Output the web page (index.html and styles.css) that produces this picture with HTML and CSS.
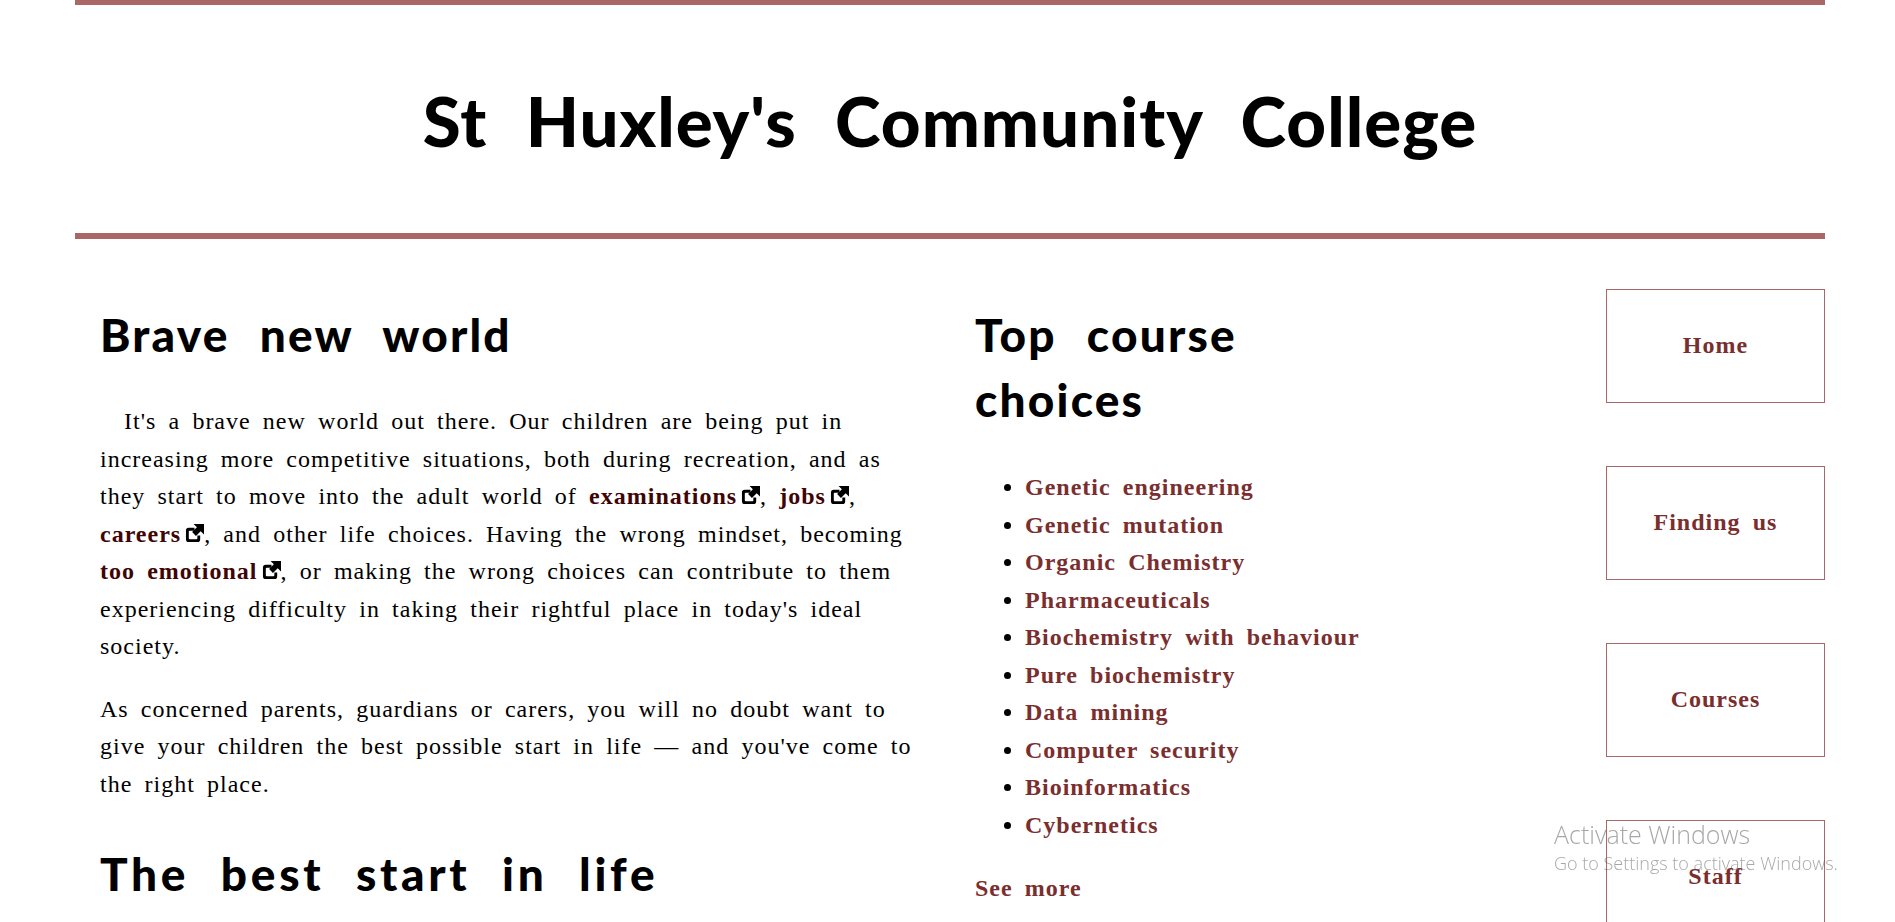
FILE: index.html
```html
<!DOCTYPE html>
<html>
<head>
    <title>St Huxley's Community College</title>
    <link rel="stylesheet" href="styles.css">
</head>
<body>
    <svg class="icon-defs">
        <symbol id="ext-link" viewBox="0 0 20 20">
            <path d="M4 4h6v3H5a1 1 0 0 0-1 1v7a1 1 0 0 0 1 1h7a1 1 0 0 0 1-1v-3h3v4a3 3 0 0 1-3 3H4a3 3 0 0 1-3-3V7a3 3 0 0 1 3-3z"/>
            <path d="M9 0h11v11l-3.5-3.5-5 5-4-4 5-5z"/>
        </symbol>
    </svg>
    <div class="page">
        <header class="site-header">
            <h1>St Huxley's Community College</h1>
        </header>
        <div class="columns">
            <main class="main-col">
                <h2>Brave new world</h2>
                <p class="intro">It's a brave new world out there. Our children are being put in increasing more competitive situations, both during recreation, and as they start to move into the adult world of <a href="#" class="ext">examinations<svg class="ext-icon"><use href="#ext-link"/></svg></a>, <a href="#" class="ext">jobs<svg class="ext-icon"><use href="#ext-link"/></svg></a>, <a href="#" class="ext">careers<svg class="ext-icon"><use href="#ext-link"/></svg></a>, and other life choices. Having the wrong mindset, becoming <a href="#" class="ext">too emotional<svg class="ext-icon"><use href="#ext-link"/></svg></a>, or making the wrong choices can contribute to them experiencing difficulty in taking their rightful place in today's ideal society.</p>
                <p>As concerned parents, guardians or carers, you will no doubt want to give your children the best possible start in life &mdash; and you've come to the right place.</p>
                <h2 class="wide-title">The best start in life</h2>
            </main>
            <aside class="course-col">
                <h2>Top course choices</h2>
                <ul class="course-list">
                    <li><a href="#">Genetic engineering</a></li>
                    <li><a href="#">Genetic mutation</a></li>
                    <li><a href="#">Organic Chemistry</a></li>
                    <li><a href="#">Pharmaceuticals</a></li>
                    <li><a href="#">Biochemistry with behaviour</a></li>
                    <li><a href="#">Pure biochemistry</a></li>
                    <li><a href="#">Data mining</a></li>
                    <li><a href="#">Computer security</a></li>
                    <li><a href="#">Bioinformatics</a></li>
                    <li><a href="#">Cybernetics</a></li>
                </ul>
                <p><a href="#">See more</a></p>
            </aside>
            <nav class="side-nav">
                <a href="#">Home</a>
                <a href="#">Finding us</a>
                <a href="#">Courses</a>
                <a href="#">Staff</a>
            </nav>
        </div>
    </div>
    <div class="activate">
        <div class="activate-title">Activate Windows</div>
        <div class="activate-sub">Go to Settings to activate Windows.</div>
    </div>
</body>
</html>
```

FILE: styles.css
```css
html, body {
    height: 922px;
    overflow: hidden;
}

body {
    margin: 0;
    background-color: #ffffff;
    color: #000000;
    font-family: "Liberation Serif", "Times New Roman", serif;
    font-size: 24px;
    line-height: 37.5px;
    letter-spacing: 1px;
    word-spacing: 5.2px;
}

.icon-defs {
    display: none;
}

.page {
    width: 1750px;
    margin-left: 75px;
}

.site-header {
    height: 228px;
    border-top: 5px solid #ab6666;
    border-bottom: 6px solid #ab6666;
    display: flex;
    align-items: center;
    justify-content: center;
}

h1, h2 {
    font-family: "Lato", "Open Sans", sans-serif;
    font-weight: 900;
    margin: 0;
}

h1 {
    font-size: 69px;
    line-height: 1.2;
    letter-spacing: 1px;
    word-spacing: 21px;
    padding-top: 4px;
}

h2 {
    font-size: 46px;
    line-height: 65px;
    letter-spacing: 2.2px;
    word-spacing: 17px;
}

.wide-title {
    letter-spacing: 3.7px;
}

a {
    color: #7a2e2e;
    font-weight: bold;
    text-decoration: none;
}

.columns {
    display: flex;
    padding-top: 50px;
}

.main-col {
    width: 816px;
    padding: 13px 25px 0;
}

.main-col p {
    margin: 25px 0;
}

.main-col .intro {
    margin-top: 36px;
    text-indent: 24px;
}

.main-col p + h2 {
    margin-top: 38px;
}

.ext {
    color: #3f0505;
}

.ext-icon {
    width: 19px;
    height: 19px;
    margin-left: 4px;
    vertical-align: -1px;
    fill: #000000;
}

.course-col {
    width: 414px;
    margin-left: 34px;
    padding-top: 13px;
}

.course-col p {
    margin: 26px 0;
}

.course-list {
    margin: 37px 0 0;
    padding-left: 50px;
}

.side-nav {
    width: 219px;
    margin-left: auto;
    display: flex;
    flex-direction: column;
    gap: 63px;
}

.side-nav a {
    height: 112px;
    flex-shrink: 0;
    border: 1px solid #ab6666;
    display: flex;
    align-items: center;
    justify-content: center;
}

.activate {
    position: fixed;
    left: 1554px;
    top: 818px;
    color: rgba(80, 80, 80, 0.5);
    font-family: "Open Sans", sans-serif;
    font-weight: 300;
    letter-spacing: 0;
    word-spacing: 0;
}

.activate-title {
    font-size: 25px;
    line-height: 32px;
}

.activate-sub {
    font-size: 18px;
    line-height: 27px;
}
```
